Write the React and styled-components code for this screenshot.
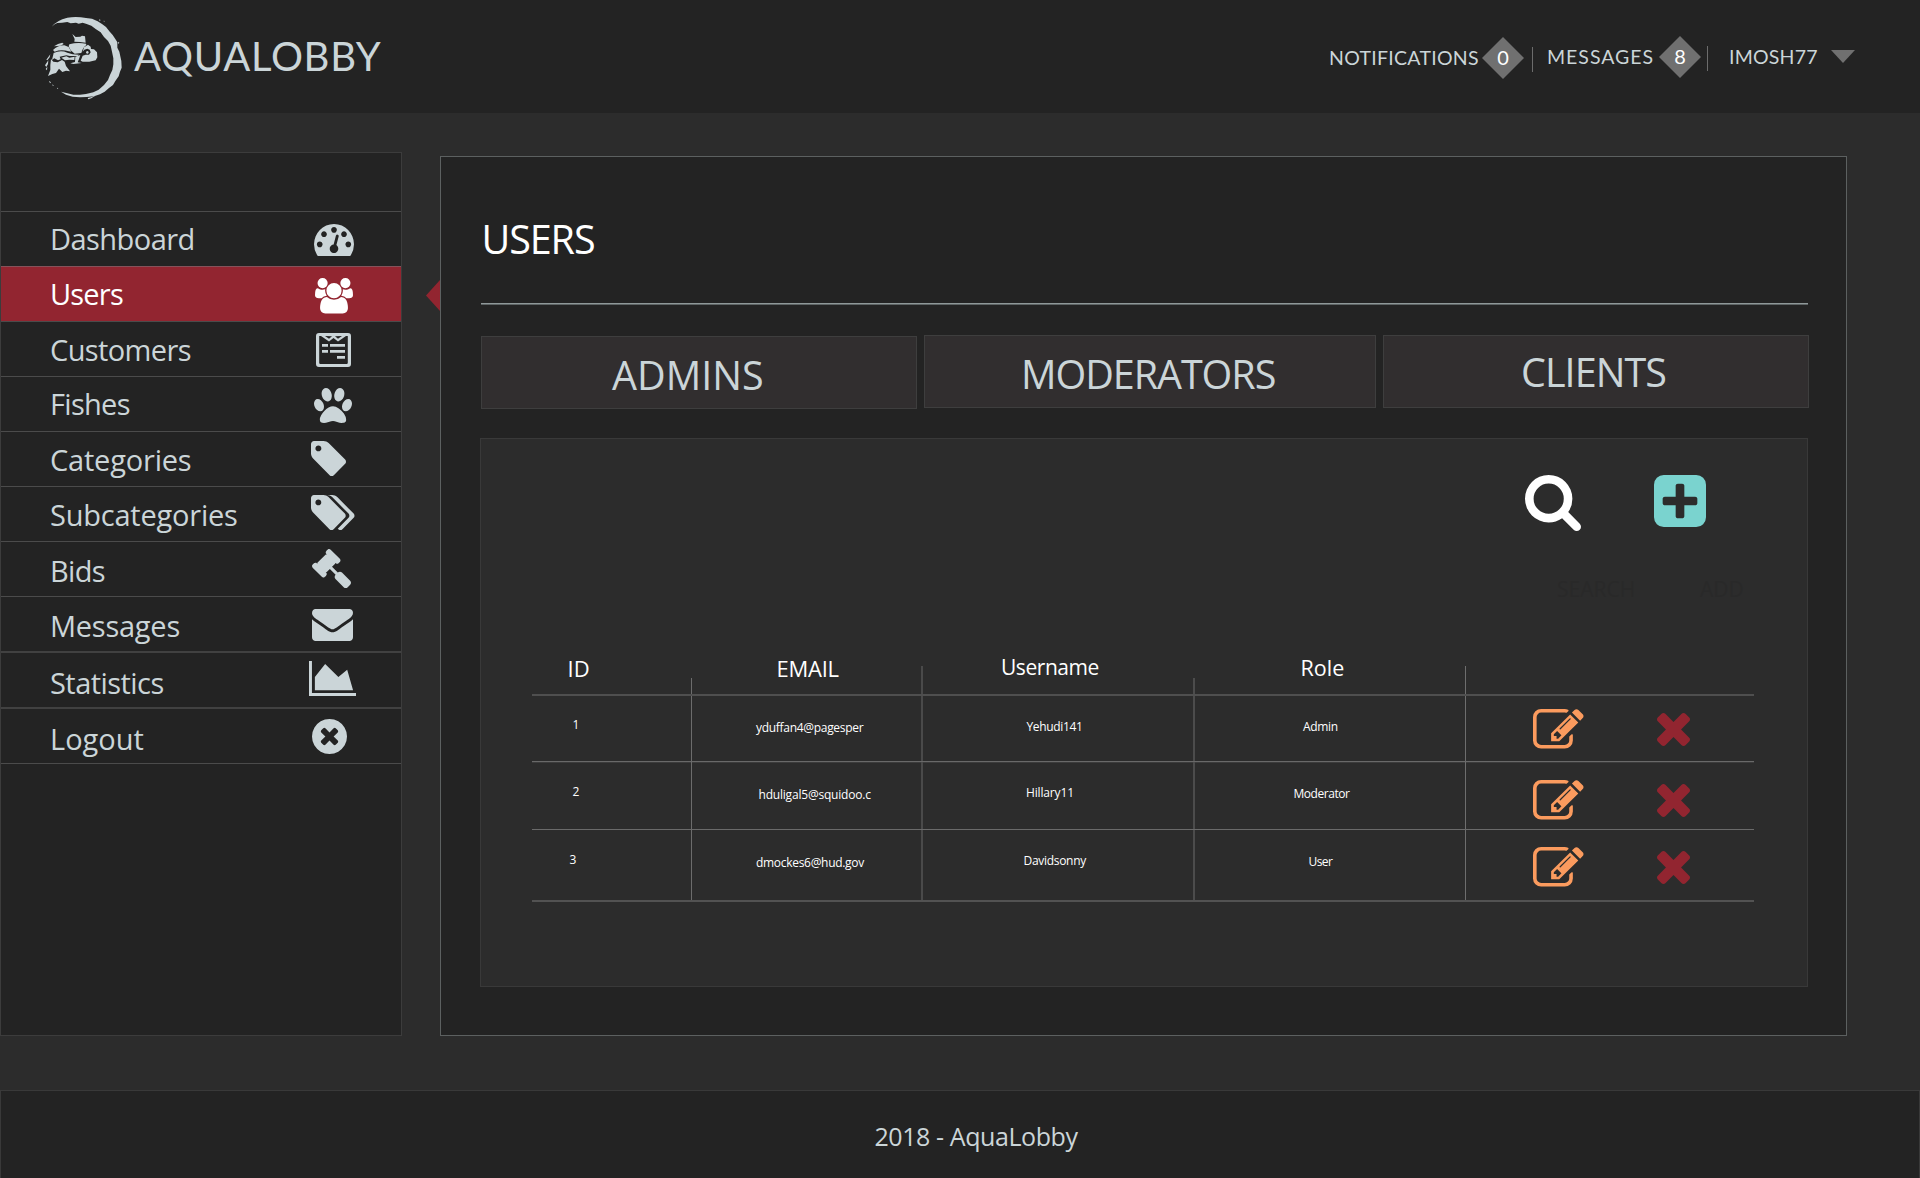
import React from 'react';
import styled, { createGlobalStyle } from 'styled-components';

const c = {
  page: '#2c2c2c',
  panel: '#232323',
  tab: '#312e2f',
  text: '#cbd5d8',
  red: '#922530',
  orange: '#fb9b5e',
  teal: '#7ad3cf',
};

const GlobalStyle = createGlobalStyle`
  * { box-sizing: border-box; }
  body {
    margin: 0;
    background: ${c.page};
    color: ${c.text};
    font-family: "Open Sans", "Noto Sans", sans-serif;
  }
`;

/* ---------- page frame ---------- */

const Page = styled.div`
  display: flex;
  flex-direction: column;
  width: 1920px;
  height: 1178px;
  overflow: hidden;
`;

const Header = styled.header`
  display: flex;
  align-items: flex-start;
  justify-content: space-between;
  flex: none;
  height: 113px;
  padding: 0 65px 0 45px;
  background: ${c.panel};
  font-family: Lato, "Open Sans", sans-serif;
`;

const Main = styled.main`
  display: flex;
  align-items: flex-start;
  flex: none;
  height: 977px;
`;

const Footer = styled.footer`
  flex: 1;
  padding: 28px 0 0 873.5px;
  border: 1px solid #393939;
  border-bottom: 0;
  background: ${c.panel};
  font-size: 25px;
  line-height: 34px;
  letter-spacing: -0.42px;
`;

/* ---------- header ---------- */

const Brand = styled.div`
  display: flex;
  align-items: flex-start;
  gap: 11px;
`;

const Logo = styled.svg`
  width: 78px;
  height: 84px;
  margin-top: 16px;
  fill: ${c.text};
`;

const BrandName = styled.h1`
  margin: 26px 0 0;
  font-size: 40px;
  font-weight: 400;
  line-height: 60px;
  letter-spacing: 0.7px;
`;

const Nav = styled.nav`
  display: flex;
  align-items: flex-start;
`;

const NavItem = styled.div`
  display: flex;
  align-items: flex-start;
  padding-top: ${(p) => p.$top}px;
  padding-left: ${(p) => p.$lead || 0}px;
`;

const NavLabel = styled.span`
  width: ${(p) => p.$width}px;
  padding-top: 6px;
  font-size: 19.5px;
  line-height: 30px;
  letter-spacing: ${(p) => p.$tracking}px;
  white-space: nowrap;
`;

const Badge = styled.span`
  width: 42px;
  height: 42px;
  background: #707070;
  clip-path: polygon(50% 0, 100% 50%, 50% 100%, 0 50%);
  color: #fff;
  font-size: 20px;
  line-height: 41px;
  text-align: center;
`;

const Divider = styled.span`
  width: 1px;
  height: 25px;
  margin: 10px 0 0 ${(p) => p.$gap}px;
  background: #6c6c6c;
`;

const Caret = styled.span`
  width: 24px;
  height: 13px;
  margin-top: 14px;
  background: #707070;
  clip-path: polygon(0 0, 100% 0, 50% 100%);
`;

/* ---------- sidebar ---------- */

const Sidebar = styled.aside`
  flex: none;
  width: 402px;
  height: 884px;
  margin-top: 39px;
  padding-top: 58px;
  border: 1px solid #3c3c3c;
  background: ${c.panel};
`;

const MenuItem = styled.div`
  display: flex;
  align-items: flex-start;
  height: ${(p) => p.$height}px;
  padding-left: 49px;
  border-top: ${(p) => (p.$soft ? '2px solid #414141' : '1px solid #4b4b4b')};
  background: ${(p) => (p.$active ? c.red : 'transparent')};
  color: ${(p) => (p.$active ? '#fff' : c.text)};
  ${(p) => p.$active && 'border-top-color: #85525a;'}
  &:last-child {
    height: 57px;
    border-bottom: 1px solid #4b4b4b;
  }
`;

const MenuLabel = styled.span`
  flex: none;
  width: 259px;
  padding-top: ${(p) => p.$drop}px;
  font-size: 29px;
  line-height: 54px;
  letter-spacing: ${(p) => p.$tracking}px;
`;

const Glyph = styled.svg`
  flex: none;
  width: ${(p) => p.$w}px;
  height: ${(p) => p.$h}px;
  margin-top: ${(p) => p.$top || 0}px;
  margin-left: ${(p) => p.$left || 0}px;
  fill: ${(p) => p.$color || 'currentColor'};
`;

const Gutter = styled.div`
  flex: none;
  width: 38px;
  padding: 167px 0 0 24px;
`;

const Pointer = styled.div`
  width: 14px;
  height: 31px;
  background: ${c.red};
  clip-path: polygon(100% 0, 100% 100%, 0 50%);
`;

/* ---------- users panel ---------- */

const Panel = styled.section`
  flex: none;
  width: 1407px;
  height: 880px;
  margin-top: 43px;
  padding: 52px 0 0 39px;
  border: 1px solid #5c6060;
  background: ${c.panel};
`;

const Title = styled.h2`
  margin: 0 0 34px 1.5px;
  color: #fff;
  font-size: 39.5px;
  font-weight: 400;
  line-height: 60px;
  letter-spacing: -1.1px;
`;

const Rule = styled.div`
  width: 1327px;
  height: 2px;
  margin-left: 1px;
  background: linear-gradient(#8f9899 50%, #5e6465 50%);
`;

const Tabs = styled.div`
  display: flex;
  gap: 7px;
  height: 74px;
  margin: 30px 0 29px 1px;
`;

const Tab = styled.div`
  width: ${(p) => p.$width}px;
  height: 73px;
  margin-top: ${(p) => p.$top || 0}px;
  padding: ${(p) => p.$drop}px 0 0 ${(p) => p.$indent}px;
  border: 1px solid #3e3e3e;
  background: ${c.tab};
  font-size: 39.5px;
  line-height: 71px;
  letter-spacing: ${(p) => p.$tracking}px;
`;

const Board = styled.div`
  width: 1328px;
  height: 549px;
  padding-top: 36px;
  border: 1px solid #393939;
  background: ${c.page};
`;

const Actions = styled.div`
  display: flex;
  gap: 73px;
  height: 57px;
  padding-left: 1044px;
`;

const Hints = styled.div`
  display: grid;
  grid-template-columns: 143px auto;
  height: 28px;
  margin: 43px 0 47px;
  padding-left: 1076px;
  color: #292929;
  font-size: 21px;
  line-height: 28px;
`;

/* ---------- table ---------- */

const Table = styled.div`
  width: 1222px;
  margin-left: 51px;
  border-bottom: 2px solid #525252;
  color: #fff;
`;

const Row = styled.div`
  display: grid;
  grid-template-columns: 159px 230px 272px 272px 289px;
  height: ${(p) => p.$height}px;
  ${(p) => p.$line === 'wide' && 'border-top: 2px solid #4f4f4f;'}
  ${(p) => p.$line === 'soft' && 'border-top: 1px solid #696969; box-shadow: inset 0 1px #3c3c3c;'}
  ${(p) => p.$line === 'thin' && 'border-top: 1px solid #6a6a6a;'}
`;

const HeadCell = styled.div`
  padding: ${(p) => p.$drop}px 0 0 ${(p) => p.$indent}px;
  background: linear-gradient(${(p) => p.$rule}, ${(p) => p.$rule}) left bottom /
    ${(p) => p.$thick}px ${(p) => p.$rise}px no-repeat;
  font-size: ${(p) => p.$size || 22}px;
  line-height: 30px;
  letter-spacing: ${(p) => p.$tracking || 0}px;
`;

const Cell = styled.div`
  padding: ${(p) => p.$top}px 0 0 ${(p) => p.$left}px;
  border-left: ${(p) => p.$thick}px solid ${(p) => p.$rule};
  font-size: 12px;
  line-height: 20px;
  letter-spacing: ${(p) => p.$tracking || 0}px;
  white-space: nowrap;
`;

const ActionCell = styled.div`
  display: flex;
  align-items: flex-start;
  padding: ${(p) => p.$top}px 0 0 67px;
  border-left: 1px solid #6e6e6e;
`;

/* ---------- icons ---------- */

const TAG =
  'M576 448q0-53-37.5-90.5t-90.5-37.5-90.5 37.5-37.5 90.5 37.5 90.5 90.5 37.5 90.5-37.5 37.5-90.5zm1067 576q0 53-37 90l-491 492q-39 37-91 37-53 0-90-37l-715-716q-38-37-64.5-101t-26.5-117v-416q0-52 38-90t90-38h416q53 0 117 26.5t102 64.5l715 714q37 39 37 91z';

const icons = {
  dashboard: {
    box: '0 256 1792 1408',
    d: 'M384 1152q0-53-37.5-90.5t-90.5-37.5-90.5 37.5-37.5 90.5 37.5 90.5 90.5 37.5 90.5-37.5 37.5-90.5zm192-448q0-53-37.5-90.5t-90.5-37.5-90.5 37.5-37.5 90.5 37.5 90.5 90.5 37.5 90.5-37.5 37.5-90.5zm428 481l101-382q6-26-7.5-48.5t-38.5-29.5-48 6.5-30 39.5l-101 382q-60 5-107 43.5t-63 98.5q-20 77 20 146t117 89 146-20 89-117q16-60-6-117t-72-91zm660-33q0-53-37.5-90.5t-90.5-37.5-90.5 37.5-37.5 90.5 37.5 90.5 90.5 37.5 90.5-37.5 37.5-90.5zm-640-640q0-53-37.5-90.5t-90.5-37.5-90.5 37.5-37.5 90.5 37.5 90.5 90.5 37.5 90.5-37.5 37.5-90.5zm448 192q0-53-37.5-90.5t-90.5-37.5-90.5 37.5-37.5 90.5 37.5 90.5 90.5 37.5 90.5-37.5 37.5-90.5zm320 448q0 261-141 483-19 29-54 29h-1402q-35 0-54-29-141-221-141-483 0-182 71-348t191-286 286-191 348-71 348 71 286 191 191 286 71 348z',
  },
  users: {
    box: '-64 0 1920 1792',
    d: 'M529 896q-162 5-265 128h-134q-82 0-138-40.5t-56-118.5q0-353 124-353 6 0 43.5 21t97.5 42.5 119 21.5q67 0 133-23-5 37-5 66 0 139 81 256zm1071 637q0 120-73 189.5t-194 69.5h-874q-121 0-194-69.5t-73-189.5q0-53 3.5-103.5t14-109 26.5-108.5 43-97.5 62-81 85.5-53.5 111.5-20q10 0 43 21.5t73 48 107 48 135 21.5 135-21.5 107-48 73-48 43-21.5q61 0 111.5 20t85.5 53.5 62 81 43 97.5 26.5 108.5 14 109 3.5 103.5zm-1024-1277q0 106-75 181t-181 75-181-75-75-181 75-181 181-75 181 75 75 181zm704 384q0 159-112.5 271.5t-271.5 112.5-271.5-112.5-112.5-271.5 112.5-271.5 271.5-112.5 271.5 112.5 112.5 271.5zm576 225q0 78-56 118.5t-138 40.5h-134q-103-123-265-128 81-117 81-256 0-29-5-66 66 23 133 23 59 0 119-21.5t97.5-42.5 43.5-21q124 0 124 353zm-128-609q0 106-75 181t-181 75-181-75-75-181 75-181 181-75 181 75 75 181z',
  },
  receipt: {
    box: '0 0 35 34',
    d: 'M3 0H32Q35 0 35 3V31Q35 34 32 34H3Q0 34 0 31V3Q0 0 3 0ZM3.2 3V29.8Q3.2 31 4.4 31H30.6Q31.8 31 31.8 29.8V3H30L22 8.4L17.5 5L13 8.4L5 3ZM9 3L13 5.8L16 3.2ZM19 3.2L22 5.8L26 3ZM6 11H12V13.8H6ZM14 11H29V13.8H14ZM6 17H12V19.8H6ZM14 17H29V19.8H14ZM21 23H29V25.8H21Z',
  },
  paw: {
    box: '64 134 1664 1536',
    d: 'M844 478q0 60-19 113.5t-63 92.5-105 39q-76 0-138-57.5t-92-135.5-30-151q0-60 19-113.5t63-92.5 105-39q77 0 138.5 57.5t91.5 135 30 151.5zM502 961q0 80-42 139t-119 59q-76 0-141.5-55.5t-100.5-133.5-35-152q0-80 42-139.5t119-59.5q76 0 141.5 55.5t100.5 134 35 152.5zM896 934q118 0 255 97.5t229 237 92 254.5q0 46-17 76.5t-48.5 45-64.5 20-76 5.5q-68 0-187.5-45t-182.5-45q-66 0-192.5 44.5t-200.5 44.5q-183 0-183-146 0-86 56-191.5t139.5-192.5 187.5-146 193-59zM1135 723q-61 0-105-39t-63-92.5-19-113.5q0-74 30-151.5t91.5-135 138.5-57.5q61 0 105 39t63 92.5 19 113.5q0 73-30 151t-92 135.5-138 57.5zM1567 619q77 0 119 59.5t42 139.5q0 74-35 152t-100.5 133.5-141.5 55.5q-77 0-119-59t-42-139q0-74 35-152.5t100.5-134 141.5-55.5z',
  },
  tag: { box: '128 128 1515 1515', d: TAG },
  tags: {
    box: '128 128 1899 1515',
    d: `${TAG}m384 0q0 53-37 90l-491 492q-39 37-91 37-36 0-59-14t-53-45l470-470q37-37 37-90 0-52-37-91l-715-714q-38-38-102-64.5t-117-26.5h224q53 0 117 26.5t102 64.5l715 714q37 39 37 91z`,
  },
  gavel: {
    box: '40 40 1731 1731',
    d: 'M1771 1536q0 53-37 90l-107 108q-39 37-91 37-53 0-90-37l-363-364q-38-36-38-90 0-53 43-96l-256-256-126 126q-14 14-34 14t-34-14q2 2 12.5 12t12.5 13 10 11.5 10 13.5 6 13.5 5.5 16.5 1.5 18q0 38-28 68-3 3-16.5 18t-19 20.5-18.5 16.5-22 15.5-22 9-26 4.5q-40 0-68-28l-408-408q-28-28-28-68 0-13 4.5-26t9-22 15.5-22 16.5-18.5 20.5-19 18-16.5q30-28 68-28 10 0 18 1.5t16.5 5.5 13.5 6 13.5 10 11.5 10 13 12.5 12 12.5q-14-14-14-34t14-34l348-348q14-14 34-14t34 14q-2-2-12.5-12t-12.5-13-10-11.5-10-13.5-6-13.5-5.5-16.5-1.5-18q0-38 28-68 3-3 16.5-18t19-20.5 18.5-16.5 22-15.5 22-9 26-4.5q40 0 68 28l408 408q28 28 28 68 0 13-4.5 26t-9 22-15.5 22-16.5 18.5-20.5 19-18 16.5q-30 28-68 28-10 0-18-1.5t-16.5-5.5-13.5-6-13.5-10-11.5-10-13-12.5-12-12.5q14 14 14 34t-14 34l-126 126 256 256q43-43 96-43 52 0 91 37l363 363q37 39 37 91z',
  },
  envelope: {
    box: '0 256 1792 1408',
    d: 'M1792 710v794q0 66-47 113t-113 47h-1472q-66 0-113-47t-47-113v-794q44 49 101 87 362 246 497 345 57 42 92.5 65.5t94.5 48 110 24.5h2q51 0 110-24.5t94.5-48 92.5-65.5q170-123 498-345 57-39 100-87zm0-294q0 79-49 151t-122 123q-376 261-468 325-10 7-42.5 30.5t-54 38-52 32.5-57.5 27-50 9h-2q-23 0-50-9t-57.5-27-52-32.5-54-38-42.5-30.5q-91-64-262-182.5t-205-142.5q-62-42-117-115.5t-55-136.5q0-78 41.5-130t118.5-52h1472q65 0 112.5 47t47.5 113z',
  },
  chart: {
    box: '0 128 2048 1536',
    d: 'M2048 1536v128h-2048v-1536h128v1408h1920zm-384-1024l256 896h-1664v-576l448-576 576 576z',
  },
  cancel: {
    box: '128 128 1536 1536',
    d: 'M1277 1122q0-26-19-45l-181-181 181-181q19-19 19-45 0-27-19-46l-90-90q-19-19-46-19-26 0-45 19l-181 181-181-181q-19-19-45-19-27 0-46 19l-90 90q-19 19-19 46 0 26 19 45l181 181-181 181q-19 19-19 45 0 27 19 46l90 90q19 19 46 19 26 0 45-19l181-181 181 181q19 19 45 19 27 0 46-19l90-90q19-19 19-46zm387-226q0 209-103 385.5t-279.5 279.5-385.5 103-385.5-103-279.5-279.5-103-385.5 103-385.5 279.5-279.5 385.5-103 385.5 103 279.5 279.5 103 385.5z',
  },
  search: {
    box: '64 128 1664 1664',
    d: 'M1216 832q0-185-131.5-316.5t-316.5-131.5-316.5 131.5-131.5 316.5 131.5 316.5 316.5 131.5 316.5-131.5 131.5-316.5zm512 832q0 52-38 90t-90 38q-54 0-90-38l-343-342q-179 124-399 124-143 0-273.5-55.5t-225-150-150-225-55.5-273.5 55.5-273.5 150-225 225-150 273.5-55.5 273.5 55.5 225 150 150 225 55.5 273.5q0 220-124 399l343 343q37 37 37 90z',
  },
  add: {
    box: '128 128 1536 1536',
    d: 'M1408 960v-128q0-26-19-45t-45-19h-320v-320q0-26-19-45t-45-19h-128q-26 0-45 19t-19 45v320h-320q-26 0-45 19t-19 45v128q0 26 19 45t45 19h320v320q0 26 19 45t45 19h128q26 0 45-19t19-45v-320h320q26 0 45-19t19-45zm256-544v960q0 119-84.5 203.5t-203.5 84.5h-960q-119 0-203.5-84.5t-84.5-203.5v-960q0-119 84.5-203.5t203.5-84.5h960q119 0 203.5 84.5t84.5 203.5z',
  },
  edit: {
    box: '0 128 1784 1408',
    d: 'M888 1184l116-116-152-152-116 116v56h96v96h56zm440-720q-16-16-33 1l-350 350q-17 17-1 33t33-1l350-350q17-17 1-33zm80 594v190q0 119-84.5 203.5t-203.5 84.5h-832q-119 0-203.5-84.5t-84.5-203.5v-832q0-119 84.5-203.5t203.5-84.5h832q63 0 117 25 15 7 18 23 3 17-9 29l-49 49q-14 14-32 8-23-6-45-6h-832q-66 0-113 47t-47 113v832q0 66 47 113t113 47h832q66 0 113-47t47-113v-126q0-13 9-22l64-64q15-15 35-7t20 29zm-96-738l288 288-672 672h-288v-288zm444 132l-92 92-288-288 92-92q28-28 68-28t68 28l152 152q28 28 28 68t-28 68z',
  },
  remove: {
    box: '302 366 1188 1188',
    d: 'M1490 1322q0 40-28 68l-136 136q-28 28-68 28t-68-28l-294-294-294 294q-28 28-68 28t-68-28l-136-136q-28-28-28-68t28-68l294-294-294-294q-28-28-28-68t28-68l136-136q28-28 68-28t68 28l294 294 294-294q28-28 68-28t68 28l136 136q28 28 28 68t-28 68l-294 294 294 294q28 28 28 68z',
  },
};

function Icon({ name, w, h, top, left, color }) {
  return (
    <Glyph
      viewBox={icons[name].box}
      preserveAspectRatio="none"
      $w={w}
      $h={h}
      $top={top}
      $left={left}
      $color={color}
    >
      <path fillRule="evenodd" d={icons[name].d} />
    </Glyph>
  );
}

function FishLogo() {
  return (
    <Logo viewBox="45 33 234 252">
      <path d="M65 65Q80 46 112 38Q140 34 168 39L186 41L203 49L216 57L228 66L238 79L248 90L256 102L262 112L262 128L268 140L274 168L275 188L270 200L266 214L256 228L249 240L236 250L224 260L210 268L192 274L170 276L150 277L128 275L108 269L93 260L112 265L130 269L150 269L168 267L190 262L206 254L222 240L234 225L240 210L247 195L250 178L250 160L246 140L242 122L234 108L222 96L212 82L198 73L184 62L170 57L158 53L146 56L138 53L122 55L112 51L96 53L82 54L74 58Z" />
      <path d="M207 43l5 2-3 3zM221 47l3 1-2 3zM264 110l4 3-3 4zM57 228l5 3 1 4-5-3zM67 238l5 4-4 0zM81 248l4 2-3 2zM173 279l10-2 15-6-14 9-9 3z" />
      <path d="M127 87L137 96L151 95L156 92L165 94L167 113L150 111L133 110L134 102Z" />
      <path d="M118 118Q142 111 168 116L169 120Q158 128 154 144L134 146L122 136L116 124Z" />
      <path d="M174 119L182 125L183 132L192 133L201 142L202 157L197 166L178 170L158 170L152 167L158 152L167 149L177 149L182 142L179 134L172 131L163 134L158 140L162 127Z" />
      <path d="M72 124L84 117L97 113L101 117L91 122Z" />
      <path d="M69 135Q82 121 103 121L116 126L124 140L116 139Q94 132 74 140Z" />
      <path d="M71 144Q92 134 112 143L128 148L147 149L143 153L119 153L109 151L89 155L92 163L84 166L73 160L66 165Z" />
      <path d="M94 158L109 154L118 158L134 155L133 165L118 164L105 166Z" />
      <path d="M136 155L151 150L147 162L143 172L155 174L130 177L121 175L135 171Z" />
      <path d="M63 162L70 170L83 172L96 165L104 170L108 183L120 199L108 197L97 201L87 191L78 204L67 207L54 213L61 195L61 180Z" />
      <path d="M49 164L61 148L59 157L52 166ZM45 181L55 166L54 177L49 186ZM47 192L52 185L51 196Z" />
      <path d="M172 138a4 4 0 1 0 .1 0z" />
    </Logo>
  );
}

/* ---------- data ---------- */

const menu = [
  { label: 'Dashboard', tracking: -0.55, drop: 0, height: 55, icon: { name: 'dashboard', w: 40, h: 32, top: 12, left: 5 } },
  { label: 'Users', tracking: -0.8, drop: 0, height: 55, active: true, icon: { name: 'users', w: 38, h: 35.5, top: 11, left: 6 } },
  { label: 'Customers', tracking: -0.62, drop: 0.5, height: 55, icon: { name: 'receipt', w: 35, h: 34, top: 11, left: 7 } },
  { label: 'Fishes', tracking: -0.7, drop: 0, height: 55, icon: { name: 'paw', w: 38, h: 35, top: 11, left: 5 } },
  { label: 'Categories', tracking: -0.2, drop: 0.5, height: 55, icon: { name: 'tag', w: 35, h: 35, top: 9, left: 2 } },
  { label: 'Subcategories', tracking: -0.22, drop: 0.5, height: 55, icon: { name: 'tags', w: 43.5, h: 35, top: 8, left: 2 } },
  { label: 'Bids', tracking: -0.7, drop: 2, height: 55, icon: { name: 'gavel', w: 39, h: 39, top: 7, left: 3 } },
  { label: 'Messages', tracking: -0.25, drop: 2, height: 55, icon: { name: 'envelope', w: 41, h: 32, top: 12, left: 3 } },
  { label: 'Statistics', tracking: -0.55, drop: 2.5, height: 56, soft: true, icon: { name: 'chart', w: 47, h: 35, top: 8, left: 0 } },
  { label: 'Logout', tracking: 0, drop: 2.5, height: 56, soft: true, icon: { name: 'cancel', w: 35, h: 35, top: 9.5, left: 3 } },
];

const rules = [
  { $thick: 0, $rule: 'transparent' },
  { $thick: 1, $rule: '#6c6c6c' },
  { $thick: 2, $rule: '#4a4a4a' },
  { $thick: 2, $rule: '#4c4c4c' },
];

const rows = [
  {
    line: 'wide', height: 67, edit: 13, remove: 4,
    cells: [
      ['1', 40.5, 19], ['yduffan4@pagesper', 64, 21.5, -0.3],
      ['Yehudi141', 103.5, 20.5, -0.35], ['Admin', 108, 21, -0.35],
    ],
  },
  {
    line: 'soft', height: 68, edit: 18, remove: 4,
    cells: [
      ['2', 40.5, 20], ['hduligal5@squidoo.c', 66.5, 23, -0.2],
      ['Hillary11', 103, 21, -0.15], ['Moderator', 98.5, 22, -0.45],
    ],
  },
  {
    line: 'thin', height: 71, edit: 17, remove: 4,
    cells: [
      ['3', 37.5, 20], ['dmockes6@hud.gov', 64, 23, -0.3],
      ['Davidsonny', 100.5, 21, -0.3], ['User', 113.5, 22, -0.6],
    ],
  },
];

export default function App() {
  return (
    <Page>
      <GlobalStyle />
      <Header>
        <Brand>
          <FishLogo />
          <BrandName>AQUALOBBY</BrandName>
        </Brand>
        <Nav>
          <NavItem $top={37}>
            <NavLabel $width={153} $tracking={0.28}>NOTIFICATIONS</NavLabel>
            <Badge>0</Badge>
            <Divider $gap={8} />
          </NavItem>
          <NavItem $top={36} $lead={14}>
            <NavLabel $width={112} $tracking={1}>MESSAGES</NavLabel>
            <Badge>8</Badge>
            <Divider $gap={6} />
          </NavItem>
          <NavItem $top={36} $lead={21}>
            <NavLabel $width={102} $tracking={0.2}>IMOSH77</NavLabel>
            <Caret />
          </NavItem>
        </Nav>
      </Header>

      <Main>
        <Sidebar>
          {menu.map((m) => (
            <MenuItem key={m.label} $height={m.height} $active={m.active} $soft={m.soft}>
              <MenuLabel $tracking={m.tracking} $drop={m.drop}>{m.label}</MenuLabel>
              <Icon {...m.icon} />
            </MenuItem>
          ))}
        </Sidebar>
        <Gutter>
          <Pointer />
        </Gutter>
        <Panel>
          <Title>USERS</Title>
          <Rule />
          <Tabs>
            <Tab $width={436} $top={1} $indent={130} $drop={3} $tracking={0}>ADMINS</Tab>
            <Tab $width={452} $indent={96} $drop={3} $tracking={-1.05}>MODERATORS</Tab>
            <Tab $width={426} $indent={137} $drop={1} $tracking={-0.95}>CLIENTS</Tab>
          </Tabs>
          <Board>
            <Actions>
              <Icon name="search" w={56} h={56} color="#fff" />
              <Icon name="add" w={52} h={52} color={c.teal} />
            </Actions>
            <Hints>
              <span>SEARCH</span>
              <span>ADD</span>
            </Hints>
            <Table>
              <Row $height={44}>
                <HeadCell {...rules[0]} $rise={0} $indent={35.5} $drop={2.5}>ID</HeadCell>
                <HeadCell {...rules[1]} $rise={16} $indent={85.5} $drop={3.4} $tracking={-0.25}>EMAIL</HeadCell>
                <HeadCell {...rules[2]} $rise={28} $indent={80} $drop={2} $size={21} $tracking={-0.45}>Username</HeadCell>
                <HeadCell {...rules[3]} $rise={16} $indent={107.5} $drop={3} $size={21.5}>Role</HeadCell>
                <HeadCell $thick={1} $rule="#6e6e6e" $rise={28} $indent={0} $drop={0} />
              </Row>
              {rows.map((r) => (
                <Row key={r.line} $height={r.height} $line={r.line}>
                  {r.cells.map(([text, left, top, tracking], i) => (
                    <Cell key={text} {...rules[i]} $left={left} $top={top} $tracking={tracking}>
                      {text}
                    </Cell>
                  ))}
                  <ActionCell $top={r.edit}>
                    <Icon name="edit" w={50.5} h={39.5} color={c.orange} />
                    <Icon name="remove" w={33} h={33} top={r.remove} left={73.5} color={c.red} />
                  </ActionCell>
                </Row>
              ))}
            </Table>
          </Board>
        </Panel>
      </Main>

      <Footer>2018 - AquaLobby</Footer>
    </Page>
  );
}
